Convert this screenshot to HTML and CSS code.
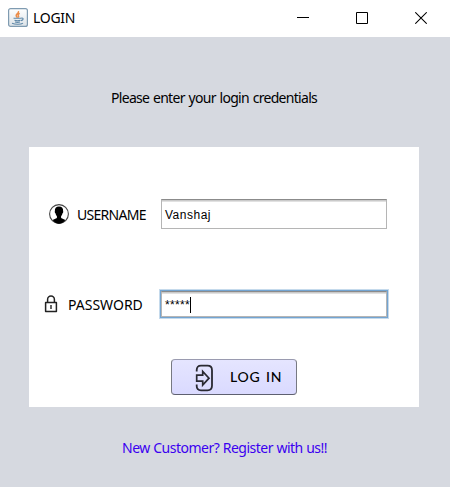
FILE: index.html
```html
<!DOCTYPE html>
<html lang="en">
<head>
<meta charset="utf-8">
<title>LOGIN</title>
<link rel="stylesheet" href="styles.css">
</head>
<body>
<div class="window">
  <header class="titlebar">
    <svg class="app-icon" width="20" height="19" viewBox="0 0 20 19">
      <defs><linearGradient id="tile" x2="0" y2="1"><stop stop-color="#fff"/><stop offset="1" stop-color="#dce3e8"/></linearGradient></defs>
      <rect x=".6" y=".6" width="18.8" height="17.8" rx="2" fill="url(#tile)" stroke="#7f9bb1" stroke-width="1.2"/>
      <path d="M10.4 3.200c1 2-2.600 2.700-2.200 4.500.1.900 1 1.300 1 2M11.700 5.300c-2 1-1.800 1.800-1.200 2.600.4.600 0 1.200-.5 1.600" fill="none" stroke="#ec8c48" stroke-width="1.500"/>
      <path d="M5.500 10.300h7.500M6.500 12.300q3 1 6 0M7 14q2.500.8 5 0M13 10.200c3-.8 2.700 1.800 0 2.400M4 15.300c3 1.300 9 1.300 11-.2" fill="none" stroke="#5f88a8" stroke-width="1.100"/>
    </svg>
    <h1 class="title">LOGIN</h1>
    <div class="controls">
      <svg width="12" height="12" viewBox="0 0 12 12"><path d="M0 5.500h12" stroke="#000"/></svg>
      <svg width="12" height="12" viewBox="0 0 12 12"><path d="M.5.500h11v11H.5z" fill="none" stroke="#000"/></svg>
      <svg width="12" height="12" viewBox="0 0 12 12"><path d="M.3.300l11.400 11.400M11.700.300L.3 11.700" stroke="#000" stroke-width="1.050"/></svg>
    </div>
  </header>
  <main class="content">
    <p class="prompt">Please enter your login credentials</p>
    <form class="panel">
      <div class="row row-user">
        <svg class="user-icon" width="20" height="20" viewBox="0 0 20 20">
          <circle cx="10" cy="10" r="9.400" fill="#fff" stroke="#444" stroke-width="1.100"/>
          <path d="M10 2.500c-3 0-4.400 1.900-4.100 4.500-.4.900.1 2.100.7 2.400.3 1.400.7 2 1.300 2.600v2L3.600 16c1.600 2.300 3.700 3.800 6.400 3.800s4.800-1.500 6.400-3.800l-4.300-2v-2c.6-.6 1-1.200 1.300-2.600.6-.3 1.100-1.500.7-2.400.3-2.600-1.100-4.500-4.100-4.500z"/>
        </svg>
        <span class="label">USERNAME</span>
        <div class="field"><span class="value">Vanshaj</span></div>
      </div>
      <div class="row row-pass">
        <svg class="lock-icon" width="14" height="18" viewBox="0 0 14 18">
          <path d="M1.600 7.500h10.800v9H1.600zM3.600 7.500V4.500a3.400 3.400 0 0 1 6.800 0v3" fill="none" stroke="#222" stroke-width="1.500" stroke-linejoin="round"/>
          <path d="M7 10v4" stroke="#222" stroke-width="1.400"/>
        </svg>
        <span class="label">PASSWORD</span>
        <div class="field focused"><span class="value stars">*****</span><i class="caret"></i></div>
      </div>
      <button class="login" type="button">
        <svg width="19" height="28" viewBox="0 0 19 28">
          <path d="M1.700 7.500V6Q1.700 1.700 6 1.700h6.500q4.500 0 4.500 4.500v15.600q0 4.500-4.500 4.500H6Q1.700 26.300 1.700 22v-1.500" fill="none" stroke="#292932" stroke-width="1.800"/>
          <path d="M1.700 11.200h6V7.400l6.300 6.800L7.700 21v-3.800h-6z" fill="none" stroke="#292932" stroke-width="1.700"/>
        </svg>
        <span class="login-text">LOG IN</span>
      </button>
    </form>
    <a class="register">New Customer? Register with us!!</a>
  </main>
</div>
</body>
</html>
```
FILE: styles.css
```css
* { box-sizing: border-box; }
body { margin: 0; background: #d6d9e0; color: #000; font: 14px/20px "Noto Sans", sans-serif; }
.window { width: 450px; height: 487px; display: flex; flex-direction: column; }
.titlebar { height: 37px; background: #fff; display: flex; align-items: center; padding: 0 23px 1px 8px; }
.app-icon { margin-top: -1px; }
.title { margin: 0 0 0 5px; font-size: 14px; font-weight: 400; letter-spacing: -0.3px; white-space: nowrap; }
.controls { margin-left: auto; display: flex; gap: 47px; }
.controls svg { display: block; }
.content { flex: 1; display: flex; flex-direction: column; align-items: flex-start; background: #d6d9e0; }
.prompt { margin: 51px 0 39px 111px; letter-spacing: -0.7px; word-spacing: 0.8px; white-space: nowrap; }
.panel { width: 390px; height: 260px; margin-left: 29px; background: #fff; display: flex; flex-direction: column; align-items: flex-start; }
.row { display: flex; align-items: center; height: 30px; width: 100%; }
.row-user { margin-top: 52px; padding-left: 20px; }
.row-pass { margin-top: 60px; padding-left: 15px; }
.label { white-space: nowrap; letter-spacing: -0.7px; padding-top: 2px; }
.row-user .label { margin-left: 8px; width: 84px; }
.row-pass .label { margin-left: 10px; width: 93px; letter-spacing: 0; }
.field { width: 226px; height: 30px; border: 1px solid #b5b5b5; border-top-color: #8b8b8b; background: linear-gradient(#cacaca 0 1px, #e1e1e1 1px 2px, #fff 2px); padding: 1px 3px 0; display: flex; align-items: center; }
.value { font: 12px/16px "Liberation Sans", sans-serif; letter-spacing: 0.5px; }
.focused { height: 26px; box-shadow: 0 0 0 1px #73a4d1, 0 0 0 2px #c5daec; }
.stars { letter-spacing: 0.3px; }
.caret { width: 1px; height: 16px; background: #000; }
.login { width: 126px; height: 36px; margin: 40px 0 0 142px; padding: 1px 0 0 23px; border: 1px solid #777982; border-top-color: #9a9bb0; border-bottom-color: #5e6070; border-radius: 4px; background: linear-gradient(#e5e5ff, #dadaff); display: flex; align-items: center; }
.login-text { margin: -2px 0 0 16px; font: 500 14px/20px Lato, sans-serif; letter-spacing: 0.8px; word-spacing: 1px; color: #000; white-space: nowrap; }
.register { margin: 31px 0 0 122px; color: #3b00f0; letter-spacing: -0.5px; word-spacing: 0.3px; white-space: nowrap; }
```
